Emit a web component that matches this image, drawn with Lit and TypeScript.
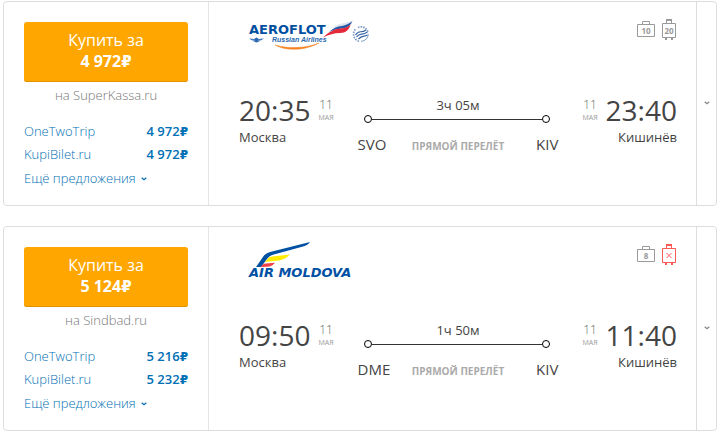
import { LitElement, html, svg, css } from "lit";
import { customElement, property } from "lit/decorators.js";

interface Offer {
  agency: string;
  price: string;
}

interface Ticket {
  airline: "aeroflot" | "moldova";
  price: string;
  seller: string;
  offers: Offer[];
  cabin: string;
  hold: string;
  departure: string;
  arrival: string;
  from: string;
  to: string;
  fromCode: string;
  toCode: string;
  duration: string;
}

const TICKETS: Ticket[] = [
  {
    airline: "aeroflot",
    price: "4 972",
    seller: "SuperKassa.ru",
    offers: [
      { agency: "OneTwoTrip", price: "4 972" },
      { agency: "KupiBilet.ru", price: "4 972" },
    ],
    cabin: "10",
    hold: "20",
    departure: "20:35",
    arrival: "23:40",
    from: "Москва",
    to: "Кишинёв",
    fromCode: "SVO",
    toCode: "KIV",
    duration: "3ч 05м",
  },
  {
    airline: "moldova",
    price: "5 124",
    seller: "Sindbad.ru",
    offers: [
      { agency: "OneTwoTrip", price: "5 216" },
      { agency: "KupiBilet.ru", price: "5 232" },
    ],
    cabin: "8",
    hold: "",
    departure: "09:50",
    arrival: "11:40",
    from: "Москва",
    to: "Кишинёв",
    fromCode: "DME",
    toCode: "KIV",
    duration: "1ч 50м",
  },
];

const chevron = html`<svg class="chevron" width="6" height="4" viewBox="0 0 6 4" aria-hidden="true">
  <path d="M0.700 0.700 L3 2.800 L5.300 0.700" fill="none" stroke="currentColor" stroke-width="1.200" />
</svg>`;

const rouble = html`<span class="rouble">₽</span>`;

@customElement("airline-logo")
class AirlineLogo extends LitElement {
  @property() airline = "";

  static styles = css`
    :host {
      display: block;
    }
    svg {
      display: block;
      overflow: visible;
    }
    .aeroflot {
      font: 700 13px "DejaVu Sans", sans-serif;
      fill: #00509f;
    }
    .tagline {
      font: italic 700 7px "Liberation Sans", sans-serif;
      fill: #2a69ad;
    }
    .moldova {
      font: italic 700 13px "DejaVu Sans", sans-serif;
      fill: #0050a4;
    }
  `;

  private aeroflot() {
    return svg`
      <path d="M84 12 C87 9 90 8 93 7.500 C97 7 100 6 104 4 C103 8 99 10 94 11 C89 11.500 87 11.500 84 12Z" fill="#dfe4ee" />
      <path d="M80 16 C84 12 88 10.500 93 10 C97 9.500 100 7.500 103 5.500 C102 9.500 98 12 93 12.500 C88 13 84 14 80 16Z" fill="#2457a5" />
      <path d="M74 21.500 C80 16 85 13 92 12.500 C97 12 100 10 101.500 8.500 C100 14 97 17 91 17 C85 17 80 18.500 74 21.500Z" fill="#e3293a" />
      <text class="aeroflot" x="0" y="18">AEROFLOT</text>
      <path d="M0 22.500 L5 23 L7.500 21.500 L10 23 L15 22.500 L10 25.500 L7.500 26.500 L5 25.500Z" fill="#2c68ad" />
      <path d="M3 24.200 H6 M9 24.200 H12" stroke="#fff" stroke-width="0.500" />
      <text class="tagline" x="23" y="26">Russian Airlines</text>
      <path d="M26 29 C36 35 56 35 70 27 C57 32.500 40 33 26 29Z" fill="#f58220" stroke="#f58220" stroke-width="0.500" />
      <path d="M110 25.200 A7.300 7.300 0 0 1 107 12.700 M109 11.500 A7.300 7.300 0 0 1 119 16" fill="none" stroke="#7d9cc8" stroke-width="1.700" stroke-dasharray="1.600 1" />
      <path d="M106.500 19 C110 13 112 18 117 14 M107.500 21 C111 16 113 20 118.500 16 M109.500 23 C113 19 115 21 118.500 19" fill="none" stroke="#3465a3" stroke-width="1.200" />
      <path d="M112 25.300 A7.300 7.300 0 0 0 119.300 18" fill="none" stroke="#5d83b8" stroke-width="0.800" />
    `;
  }

  private moldova() {
    return svg`
      <path d="M7 26 L15 14.500 Q17 12 21 11 L61 1 Q59 4 54 5.500 L23 14 Q20 15 18 18 L12 26Z" fill="#0050a4" />
      <path d="M16 21 L19 17.500 Q20 16 23 15.600 L41 13.500 Q36 18.500 30 19.500Z" fill="#ffec00" />
      <path d="M11.500 26 L14 23.500 Q15 22.500 17 22.400 L26 21.700 Q23 25.500 18 25.700Z" fill="#ef4146" />
      <text class="moldova" x="0" y="36">AIR MOLDOVA</text>
    `;
  }

  render() {
    const isAeroflot = this.airline === "aeroflot";
    return html`<svg width="122" height="38" viewBox="0 0 122 38" role="img" aria-label=${isAeroflot ? "Aeroflot" : "Air Moldova"}>
      ${isAeroflot ? this.aeroflot() : this.moldova()}
    </svg>`;
  }
}

@customElement("baggage-info")
class BaggageInfo extends LitElement {
  @property() cabin = "";
  @property() hold = "";

  static styles = css`
    :host {
      display: flex;
      gap: 7px;
      color: #999;
    }
    svg {
      display: block;
    }
    .none {
      color: #fb5a55;
    }
    text {
      font: 700 8px "Open Sans", sans-serif;
      fill: currentColor;
      text-anchor: middle;
    }
  `;

  render() {
    return html`
      <svg width="18" height="22" viewBox="0 0 18 22">
        <path d="M0.500 5.500 H17.500 V17.500 H0.500Z M5.500 5.500 V2.500 H12.500 V5.500" fill="none" stroke="currentColor" />
        <text x="9" y="15">${this.cabin}</text>
      </svg>
      <svg class=${this.hold ? "" : "none"} width="14" height="22" viewBox="0 0 14 22">
        <path d="M0.500 4.500 H13.500 V18.500 H0.500Z M4.500 4 V1 H9.500 V4" fill="none" stroke="currentColor" />
        <path d="M4 0 H10 V2 H4Z M3 19 H5 V21 H3Z M9 19 H11 V21 H9Z" fill="currentColor" />
        ${this.hold
          ? svg`<text x="7" y="15">${this.hold}</text>`
          : svg`<path d="M4.500 9 L9.500 14 M9.500 9 L4.500 14" stroke="currentColor" />`}
      </svg>
    `;
  }
}

@customElement("ticket-card")
class TicketCard extends LitElement {
  @property({ attribute: false }) ticket!: Ticket;

  static styles = css`
    :host {
      display: flex;
      border: 1px solid #ddd;
      border-radius: 4px;
      background: #fff;
    }
    button {
      font: inherit;
      color: inherit;
      background: none;
      border: 0;
      padding: 0;
      cursor: pointer;
    }
    .offers {
      box-sizing: border-box;
      flex: none;
      width: 205px;
      padding: 20px 20px 15px;
      border-right: 1px solid #e5e5e5;
      font-weight: 300;
      color: #0070b5;
    }
    .buy {
      display: block;
      width: 100%;
      padding: 8px 0 10px;
      border-radius: 3px;
      background: #ffa600;
      box-shadow: inset 0 -1px #e29300;
      color: #fff;
      font-size: 16px;
      font-weight: 500;
      line-height: 21px;
    }
    .sum {
      display: block;
      font-weight: 700;
    }
    .rouble {
      font-family: "DejaVu Sans", sans-serif;
      font-size: 12px;
      font-weight: 700;
      line-height: 1;
    }
    .sum .rouble {
      font-size: 15px;
    }
    .seller {
      margin: 0 0 12px;
      line-height: 26px;
      text-align: center;
      color: #777;
    }
    .offer {
      display: flex;
      justify-content: space-between;
      line-height: 23px;
      color: inherit;
      text-decoration: none;
    }
    .price {
      font-weight: 600;
    }
    .more {
      display: flex;
      align-items: center;
      gap: 5px;
      line-height: 24px;
    }
    .flight {
      flex: 1;
      min-width: 0;
      padding: 14px 19px 0 30px;
    }
    .head {
      display: flex;
      justify-content: space-between;
      padding: 0 1px 0 10px;
      margin-bottom: 38px;
    }
    baggage-info {
      margin-top: 3px;
    }
    .body {
      display: flex;
      gap: 24px;
    }
    .when {
      display: flex;
      gap: 8px;
    }
    .time {
      font-size: 28px;
      line-height: 36px;
    }
    .date {
      padding-top: 5px;
      font-size: 12px;
      font-weight: 300;
      line-height: 16px;
      text-align: center;
      color: #666;
    }
    .month {
      display: block;
      font-size: 7px;
      line-height: 10px;
      font-weight: 400;
      color: #999;
    }
    .city {
      line-height: 18px;
    }
    .arrive .city {
      text-align: right;
    }
    .route {
      flex: 1;
      padding-top: 3px;
    }
    .duration {
      line-height: 20px;
      text-align: center;
    }
    .track {
      display: flex;
      align-items: center;
      margin: 0 8px 11px 6px;
    }
    .stop {
      box-sizing: border-box;
      width: 8px;
      height: 8px;
      border: 1px solid #000;
      border-radius: 50%;
    }
    .line {
      flex: 1;
      height: 1px;
      background: #333;
    }
    .codes {
      display: grid;
      grid-template-columns: 1fr auto 1fr;
      align-items: center;
      font-size: 15px;
      line-height: 20px;
    }
    .to {
      text-align: right;
    }
    .direct {
      padding-top: 5px;
      font-size: 10px;
      line-height: 15px;
      font-weight: 700;
      color: #aaa;
    }
    .expand {
      flex: none;
      width: 20px;
      padding-bottom: 4px;
      border-left: 1px solid #ddd;
      color: #888;
    }
    .chevron {
      display: inline-block;
      vertical-align: middle;
    }
    .more .chevron {
      margin-top: 2px;
    }
  `;

  render() {
    const t = this.ticket;
    return html`
      <section class="offers">
        <button class="buy">Купить за <span class="sum">${t.price}${rouble}</span></button>
        <p class="seller">на ${t.seller}</p>
        ${t.offers.map(
          (o) => html`<a class="offer" href="#"><span>${o.agency}</span><span class="price">${o.price}${rouble}</span></a>`,
        )}
        <button class="more">Ещё предложения ${chevron}</button>
      </section>
      <section class="flight">
        <div class="head">
          <airline-logo .airline=${t.airline}></airline-logo>
          <baggage-info .cabin=${t.cabin} .hold=${t.hold}></baggage-info>
        </div>
        <div class="body">
          <div>
            <div class="when">
              <span class="time">${t.departure}</span>
              <span class="date">11<span class="month">МАЯ</span></span>
            </div>
            <div class="city">${t.from}</div>
          </div>
          <div class="route">
            <div class="duration">${t.duration}</div>
            <div class="track"><span class="stop"></span><span class="line"></span><span class="stop"></span></div>
            <div class="codes">
              <span>${t.fromCode}</span><span class="direct">ПРЯМОЙ ПЕРЕЛЁТ</span><span class="to">${t.toCode}</span>
            </div>
          </div>
          <div class="arrive">
            <div class="when">
              <span class="date">11<span class="month">МАЯ</span></span>
              <span class="time">${t.arrival}</span>
            </div>
            <div class="city">${t.to}</div>
          </div>
        </div>
      </section>
      <button class="expand" aria-label="Подробнее">${chevron}</button>
    `;
  }
}

@customElement("app-root")
class AppRoot extends LitElement {
  static styles = css`
    :host {
      display: flex;
      flex-direction: column;
      gap: 20px;
      padding: 1px 4px 1px 3px;
      background: #fff;
      color: #444;
      font: 400 13px "Open Sans", "Noto Sans", sans-serif;
    }
  `;

  render() {
    return TICKETS.map((t) => html`<ticket-card .ticket=${t}></ticket-card>`);
  }
}
